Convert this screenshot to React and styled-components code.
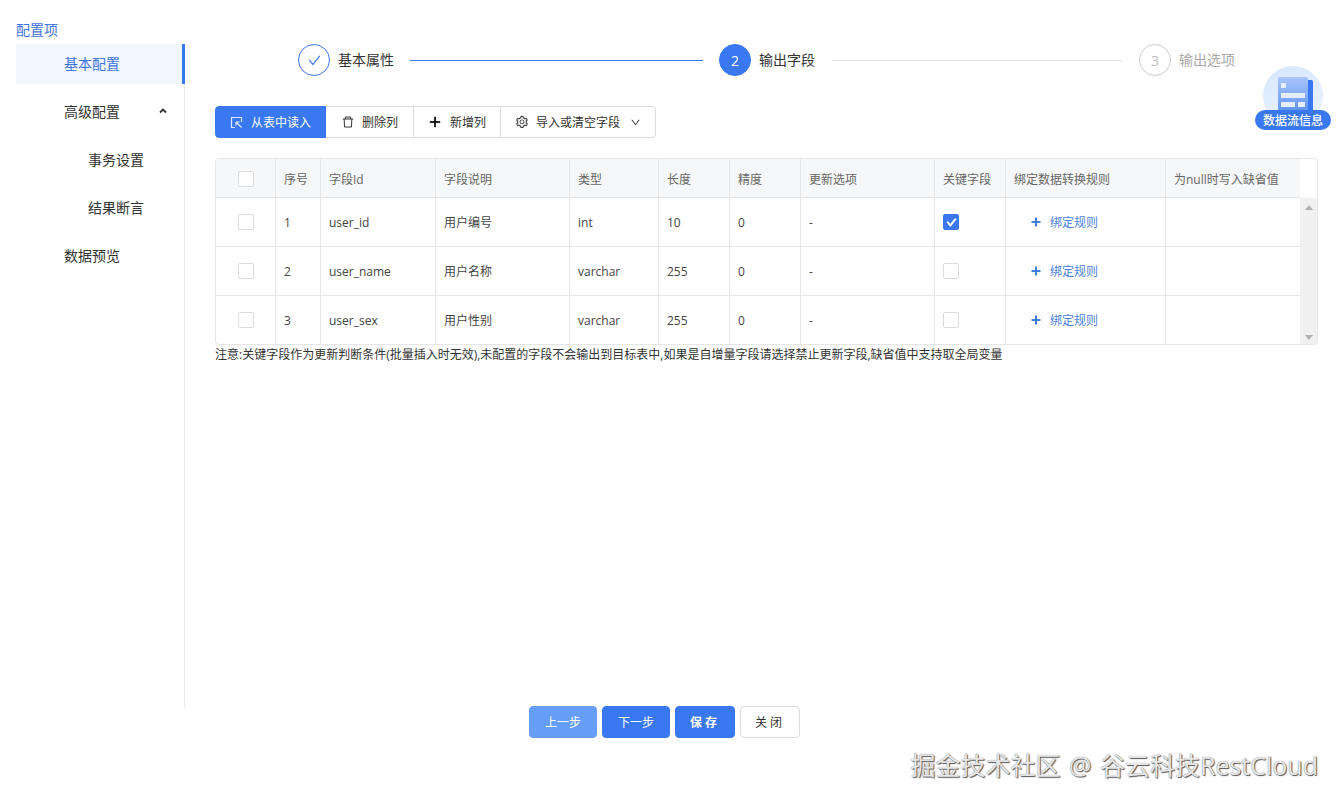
import React from "react";
import styled, { createGlobalStyle } from "styled-components";
import { AiOutlineDelete, AiOutlinePlus, AiOutlineSetting, AiOutlineDown, AiOutlineCheck } from "react-icons/ai";

const FONT = `"Open Sans", "Noto Sans CJK SC", sans-serif`;
const Global = createGlobalStyle`
  html, body { margin: 0; padding: 0; background: #fff; }
  body { font-family: ${FONT}; color: #333; overflow: hidden; }
  * { box-sizing: border-box; }
`;
const BLUE = "#3a78f2";
const BLUE_TEXT = "#3f74dc";
const Page = styled.div`
  position: relative; width: 1341px; height: 802px; overflow: hidden;
  display: flex; flex-direction: column;
`;
const Top = styled.div`display: flex; height: 708px; padding-left: 16px;`;
const Sidebar = styled.aside`width: 169px; flex: none; padding-top: 20px; display: flex; flex-direction: column;`;
const SideTitle = styled.div`font-size: 14px; line-height: 19px; color: ${BLUE_TEXT}; height: 24px;`;
const Menu = styled.nav`flex: 1; border-right: 1px solid #e8e8e8; display: flex; flex-direction: column; gap: 8px;`;
const MenuItem = styled.div`
  height: 40px; display: flex; align-items: center; justify-content: space-between;
  margin-right: ${p => (p.$active ? "-1px" : "0")};
  padding: 0 17px 2px ${p => (p.$child ? 72 : 48)}px; font-size: 14px;
  color: ${p => (p.$active ? BLUE_TEXT : "#333")};
  background: ${p => (p.$active ? "#f0f7ff" : "transparent")};
  border-right: ${p => (p.$active ? `3px solid ${BLUE}` : "none")};
`;
const Main = styled.main`flex: 1; min-width: 0; padding: 0 23px 0 30px;`;
const Steps = styled.div`display: flex; align-items: center; height: 32px; margin-top: 44px; padding-left: 83px;`;
const Circle = styled.div`
  width: 32px; height: 32px; border-radius: 50%; flex: none; display: flex; align-items: center; justify-content: center;
  font-size: 14px;
  border: 1px solid ${p => (p.$state === "wait" ? "#ccc" : BLUE)};
  background: ${p => (p.$state === "active" ? BLUE : "#fff")};
  color: ${p => (p.$state === "active" ? "#fff" : p.$state === "wait" ? "#bbb" : BLUE)};
`;
const StepLabel = styled.span`
  font-size: 14px; margin-left: 8px; flex: none; width: 56px; white-space: nowrap; padding-bottom: 2px;
  color: ${p => (p.$wait ? "#aaa" : "#333")};
`;
const StepLine = styled.div`
  flex: none; width: ${p => p.$w}px; height: 1px; margin: 0 16px 0 ${p => p.$ml}px; background: ${p => (p.$done ? BLUE : "#e4e4e4")};
`;
const Toolbar = styled.div`display: flex; margin-top: 30px; height: 32px; width: fit-content;`;
const ToolBtn = styled.button`
  height: 32px; width: ${p => p.$w}px; display: flex; align-items: center; justify-content: center; gap: ${p => p.$gap || 7}px;
  font: 12px ${FONT}; padding: 0; cursor: pointer;
  border: 1px solid ${p => (p.$primary ? BLUE : "#dcdcdc")}; border-left-width: ${p => (p.$primary ? 1 : 0)}px;
  background: ${p => (p.$primary ? BLUE : "#fff")}; color: ${p => (p.$primary ? "#fff" : "#333")};
  border-radius: ${p => (p.$primary ? "4px 0 0 4px" : p.$last ? "0 4px 4px 0" : "0")};
  svg { flex: none; }
`;
const TableBox = styled.div`
  margin-top: 20px; width: 1103px; height: 187px; border: 1px solid #e6e6e6; border-radius: 4px; overflow: hidden;
`;
const COLS = "60px 45px 115px 134px 89px 71px 71px 134px 71px 160px 134px";
const HeadRow = styled.div`display: grid; grid-template-columns: ${COLS}; width: 1084px; height: 39px; background: #f6f7f9; border-bottom: 1px solid #e6e6e6;`;
const BodyWrap = styled.div`display: flex; height: 147px;`;
const Body = styled.div`width: 1084px; flex: none;`;
const Row = styled.div`
  display: grid; grid-template-columns: ${COLS}; height: 49px;
  border-bottom: 1px solid ${p => (p.$last ? "transparent" : "#e6e6e6")};
`;
const Cell = styled.div`
  display: flex; align-items: center; font-size: 12px; min-width: 0; white-space: nowrap;
  color: ${p => (p.$head ? "#666" : "#444")};
  padding-top: ${p => (p.$head ? 2 : 0)}px;
  border-right: ${p => (p.$end ? "none" : "1px solid #e6e6e6")};
  justify-content: ${p => (p.$center ? "center" : "flex-start")};
  padding-left: ${p => (p.$center ? 0 : 8)}px;
`;
const Check = styled.span`
  width: 16px; height: 16px; border-radius: 2px; display: inline-flex; align-items: center; justify-content: center;
  border: 1px solid ${p => (p.$on ? BLUE : "#dcdcdc")}; background: ${p => (p.$on ? BLUE : "#fff")}; color: #fff;
`;
const RuleBtn = styled.span`display: inline-flex; align-items: center; gap: 8px; margin-left: 16px; color: #4a7fe0; font-size: 12px;`;
const Scrollbar = styled.div`
  flex: 1; background: #f0f0f0; display: flex; flex-direction: column; justify-content: space-between; align-items: center; padding: 7px 0 5px;
`;
const Arrow = styled.i`
  width: 0; height: 0; border-left: 4px solid transparent; border-right: 4px solid transparent;
  ${p => (p.$up ? "border-bottom: 5px solid #b0b0b0;" : "border-top: 5px solid #b0b0b0;")}
`;
const Note = styled.div`font-size: 12px; line-height: 16px; margin-top: 2px; color: #333; white-space: nowrap;`;
const Footer = styled.div`height: 32px; margin-top: -2px; display: flex; justify-content: center; gap: 5px; padding-right: 12px;`;
const FootBtn = styled.button`
  width: ${p => p.$w}px; height: 32px; border-radius: 4px; font: ${p => (p.$bold ? 700 : 400)} 12px ${FONT}; padding: 0;
  letter-spacing: ${p => (p.$wide ? "3px" : "0")};
  border: 1px solid ${p => (p.$kind === "default" ? "#dcdcdc" : p.$kind === "off" ? "#659df8" : BLUE)};
  background: ${p => (p.$kind === "default" ? "#fff" : p.$kind === "off" ? "#659df8" : BLUE)};
  color: ${p => (p.$kind === "default" ? "#333" : "#fff")};
`;
const Watermark = styled.div`
  position: absolute; right: 23px; top: 749px; font-size: 25px; line-height: 32px; word-spacing: 2px; color: #e6e6e6; white-space: nowrap;
  text-shadow: 1px 1px 1px #555, 0 0 1px #777;
`;
const Badge = styled.div`position: absolute; left: 1255px; top: 66px; width: 76px; height: 64px;`;
const Orb = styled.div`
  position: absolute; left: 8px; top: 0; width: 60px; height: 60px; border-radius: 50%;
  background: linear-gradient(160deg, #d6e6ff, #eef5ff); display: flex; justify-content: center; padding-top: 11px;
  svg { margin-left: 6px; }
`;
const Pill = styled.div`
  position: absolute; left: 0; top: 44px; width: 76px; height: 20px; border-radius: 10px; background: ${BLUE}; color: #fff;
  font-size: 12px; font-weight: 500; display: flex; align-items: center; justify-content: center;
`;

const heads = ["序号", "字段Id", "字段说明", "类型", "长度", "精度", "更新选项", "关键字段", "绑定数据转换规则", "为null时写入缺省值"];
const rows = [
  ["1", "user_id", "用户编号", "int", "10", "0", "-", true],
  ["2", "user_name", "用户名称", "varchar", "255", "0", "-", false],
  ["3", "user_sex", "用户性别", "varchar", "255", "0", "-", false],
];

const ReadIcon = () => (
  <svg width="13" height="13" viewBox="0 0 13 13" fill="none" stroke="#dce8ff" strokeWidth="1.2">
    <path d="M5 11.5H1.5v-10h10V6" />
    <path d="M6 6l5.5 5.5M6 6v3.6M6 6h3.6" />
  </svg>
);
const UpIcon = () => (
  <svg width="8" height="6" viewBox="0 0 8 6" fill="none" stroke="#333" strokeWidth="1.8"><path d="M1 4.5L4 1.5l3 3" /></svg>
);
const FlowIcon = () => (
  <svg width="36" height="36" viewBox="0 0 36 36">
    <defs>
      <linearGradient id="fl" x1="0" y1="0" x2="0" y2="1">
        <stop offset="0" stopColor="#a9c6fb" /><stop offset="1" stopColor="#5f91f6" />
      </linearGradient>
    </defs>
    <rect x="28" y="3" width="7" height="33" rx="1.5" fill="#3a78f2" />
    <rect x="0" y="0" width="30" height="36" rx="2" fill="url(#fl)" />
    <rect x="3" y="6" width="5" height="5" fill="#e4eeff" />
    <rect x="3" y="16" width="24" height="5" fill="#e4eeff" />
    <rect x="3" y="25" width="14" height="5" fill="#e4eeff" />
    <rect x="20" y="25" width="7" height="5" fill="#e4eeff" />
  </svg>
);

export default function App() {
  return (
    <Page>
      <Global />
      <Top>
        <Sidebar>
          <SideTitle>配置项</SideTitle>
          <Menu>
            <MenuItem $active>基本配置</MenuItem>
            <MenuItem>高级配置<UpIcon /></MenuItem>
            <MenuItem $child>事务设置</MenuItem>
            <MenuItem $child>结果断言</MenuItem>
            <MenuItem>数据预览</MenuItem>
          </Menu>
        </Sidebar>
        <Main>
          <Steps>
            <Circle $state="done"><AiOutlineCheck size={15} /></Circle>
            <StepLabel>基本属性</StepLabel>
            <StepLine $done $w={293} $ml={16} />
            <Circle $state="active">2</Circle>
            <StepLabel>输出字段</StepLabel>
            <StepLine $w={291} $ml={17} />
            <Circle $state="wait">3</Circle>
            <StepLabel $wait>输出选项</StepLabel>
          </Steps>
          <Toolbar>
            <ToolBtn $primary $w={111} $gap={8}><ReadIcon />从表中读入</ToolBtn>
            <ToolBtn $w={88}><AiOutlineDelete size={14} />删除列</ToolBtn>
            <ToolBtn $w={87} $gap={8}><AiOutlinePlus size={14} color="#111" strokeWidth={60} />新增列</ToolBtn>
            <ToolBtn $last $w={155}><AiOutlineSetting size={14} />导入或清空字段<AiOutlineDown size={11} style={{ marginLeft: 3 }} /></ToolBtn>
          </Toolbar>
          <TableBox>
            <HeadRow>
              <Cell $head $center><Check /></Cell>
              {heads.map((h, i) => <Cell $head $end={i === 9} key={h}>{h}</Cell>)}
            </HeadRow>
            <BodyWrap>
              <Body>
                {rows.map((r, i) => (
                  <Row key={r[0]} $last={i === 2}>
                    <Cell $center><Check /></Cell>
                    {r.slice(0, 7).map((v, j) => <Cell key={j}>{v}</Cell>)}
                    <Cell><Check $on={r[7]}>{r[7] && <AiOutlineCheck size={11} strokeWidth={100} />}</Check></Cell>
                    <Cell><RuleBtn><AiOutlinePlus size={12} color="#3a78d8" strokeWidth={80} />绑定规则</RuleBtn></Cell>
                    <Cell $end />
                  </Row>
                ))}
              </Body>
              <Scrollbar><Arrow $up /><Arrow /></Scrollbar>
            </BodyWrap>
          </TableBox>
          <Note>注意:关键字段作为更新判断条件(批量插入时无效),未配置的字段不会输出到目标表中,如果是自增量字段请选择禁止更新字段,缺省值中支持取全局变量</Note>
        </Main>
      </Top>
      <Footer>
        <FootBtn $kind="off" $w={68}>上一步</FootBtn>
        <FootBtn $w={68}>下一步</FootBtn>
        <FootBtn $w={60} $bold $wide>保存</FootBtn>
        <FootBtn $kind="default" $w={60} $wide>关闭</FootBtn>
      </Footer>
      <Badge>
        <Orb><FlowIcon /></Orb>
        <Pill>数据流信息</Pill>
      </Badge>
      <Watermark>掘金技术社区 @ 谷云科技RestCloud</Watermark>
    </Page>
  );
}
